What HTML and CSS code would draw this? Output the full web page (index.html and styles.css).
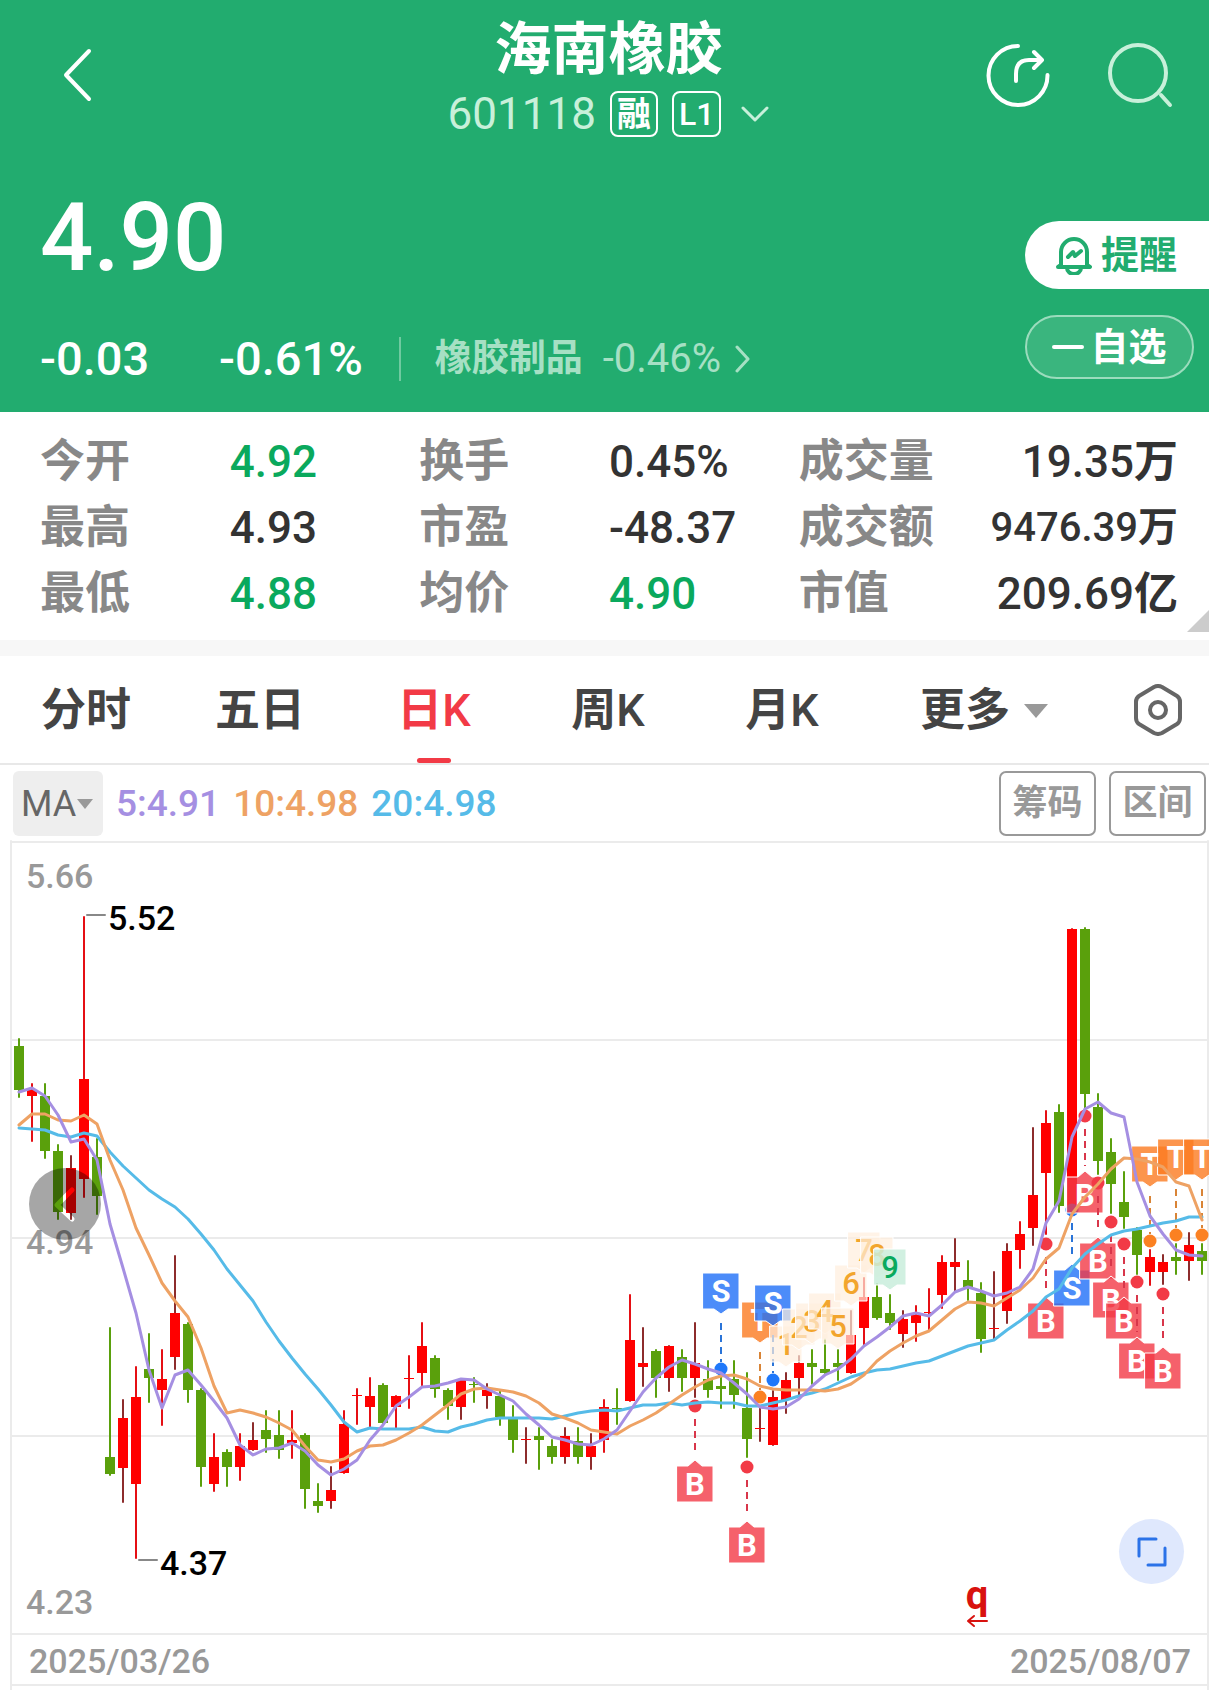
FILE: index.html
```html
<!DOCTYPE html>
<html lang="zh-CN">
<head>
<meta charset="utf-8">
<meta name="viewport" content="width=device-width, initial-scale=1">
<title>海南橡胶 601118</title>
<link rel="stylesheet" href="styles.css">
</head>
<body>
<header class="top">
  <div class="nav">
    <button class="icon-btn back" type="button" aria-label="返回">
      <svg width="32" height="54" viewBox="0 0 32 54"><path d="M28 3L5 27L28 51"/></svg>
    </button>
    <div class="name">
      <h1>海南橡胶</h1>
      <div class="code">
        <span>601118</span>
        <span class="badge">融</span>
        <span class="badge level">L1</span>
        <svg width="28" height="18" viewBox="0 0 28 18"><path d="M2 3L14 15L26 3"/></svg>
      </div>
    </div>
    <div class="actions">
      <button class="icon-btn" type="button" aria-label="分享">
        <svg width="66" height="66" viewBox="0 0 66 66">
          <path d="M33 4A29.500 29.500 0 1 0 62.500 33"/>
          <path d="M31 39V32Q31 18 44 18H56M49 10L57 18L49 26"/>
        </svg>
      </button>
      <button class="icon-btn soft" type="button" aria-label="搜索">
        <svg width="66" height="66" viewBox="0 0 66 66">
          <circle cx="31" cy="31" r="28"/>
          <path d="M54 53L63 63"/>
        </svg>
      </button>
    </div>
  </div>
  <div class="quote">
    <div class="quote-main">
      <div class="price">4.90</div>
      <div class="change">
        <span class="diff">-0.03</span>
        <span class="pct">-0.61%</span>
        <a class="sector" href="#sector">
          <span>橡胶制品</span>
          <span class="sector-pct">-0.46%</span>
          <svg width="16" height="28" viewBox="0 0 16 28"><path d="M2 2L13 14L2 26"/></svg>
        </a>
      </div>
    </div>
    <div class="quote-side">
      <button class="remind" type="button">
        <svg width="38" height="40" viewBox="0 0 38 40">
          <path d="M6 30V17A13 13 0 0 1 32 17V30L35 32H3Z"/>
          <path d="M12 33A7 6 0 0 0 26 33"/>
          <path d="M13 22L18 17L20 21L26 16"/>
        </svg>
        提醒
      </button>
      <button class="fav" type="button">
        <svg width="32" height="6" viewBox="0 0 32 6"><path d="M2 3H30"/></svg>
        自选
      </button>
    </div>
  </div>
</header>

<section class="stats">
  <div class="stat"><span class="label">今开</span><span class="down">4.92</span></div>
  <div class="stat"><span class="label">换手</span><span>0.45%</span></div>
  <div class="stat"><span class="label">成交量</span><span>19.35<b>万</b></span></div>
  <div class="stat"><span class="label">最高</span><span>4.93</span></div>
  <div class="stat"><span class="label">市盈</span><span>-48.37</span></div>
  <div class="stat"><span class="label">成交额</span><span class="long">9476.39<b>万</b></span></div>
  <div class="stat"><span class="label">最低</span><span class="down">4.88</span></div>
  <div class="stat"><span class="label">均价</span><span class="down">4.90</span></div>
  <div class="stat"><span class="label">市值</span><span>209.69<b>亿</b></span></div>
</section>

<nav class="tabs">
  <button type="button">分时</button>
  <button type="button">五日</button>
  <button type="button" class="active">日<span>K</span></button>
  <button type="button">周<span>K</span></button>
  <button type="button">月<span>K</span></button>
  <button type="button">更多<i class="caret"></i></button>
  <button type="button" aria-label="设置">
    <svg width="50" height="52" viewBox="0 0 50 52">
      <path d="M21 3Q25 1 29 3L44 12Q47 14 47 18V34Q47 38 44 40L29 49Q25 51 21 49L6 40Q3 38 3 34V18Q3 14 6 12Z"/>
      <circle cx="25" cy="26" r="8"/>
    </svg>
  </button>
</nav>

<div class="ma-bar">
  <div class="ma-pick">
    <select aria-label="指标">
      <option>MA</option>
      <option>BOLL</option>
    </select>
    <i class="caret"></i>
  </div>
  <span class="ma5">5:4.91</span>
  <span class="ma10">10:4.98</span>
  <span class="ma20">20:4.98</span>
  <button class="tool" type="button">筹码</button>
  <button class="tool" type="button">区间</button>
</div>

<main class="chart">
  <svg id="kline" viewBox="0 0 1209 850" role="img" aria-label="日K线">
    <g class="grid">
      <path d="M11 2H1209M11 200H1209M11 398H1209M11 596H1209M11 794H1209M11 845H1209M11 1V850M1208 1V850"/>
    </g>
    <g class="axis">
      <text x="26" y="48">5.66</text>
      <text x="26" y="414">4.94</text>
      <text x="26" y="774">4.23</text>
      <text x="29" y="833">2025/03/26</text>
      <text x="1191" y="833" text-anchor="end">2025/08/07</text>
    </g>
    <g id="candles"></g>
    <g id="marks"></g>
    <g id="lines"></g>
    <g class="extreme">
      <path d="M87 75H105M139 720H157"/>
      <text x="108" y="90">5.52</text>
      <text x="160" y="735">4.37</text>
    </g>
    <g class="exright">
      <text x="977" y="769" text-anchor="middle">q</text>
      <path d="M987 781H968M974 776L968 781L974 786"/>
    </g>
  </svg>
  <button class="prev" type="button" aria-label="上一段">
    <svg width="72" height="72" viewBox="0 0 72 72">
      <mask id="cut">
        <rect width="72" height="72" fill="#fff"/>
        <path d="M43 22L28 37L43 51" fill="none" stroke="#000" stroke-width="5"/>
      </mask>
      <circle cx="36" cy="36" r="36" mask="url(#cut)"/>
    </svg>
  </button>
  <button class="full" type="button" aria-label="全屏">
    <svg width="32" height="32" viewBox="0 0 32 32"><path d="M20 3H3V20M12 29H29V12"/></svg>
  </button>
</main>
<script src="chart.js"></script>
</body>
</html>
```
FILE: styles.css
```css
* {box-sizing:border-box;}
body {margin:0; background:#fff; color:#333; font:44px/66px Roboto, "Noto Sans CJK SC", sans-serif;}
button, select {margin:0; padding:0; border:0; background:none; color:inherit; font:inherit; cursor:pointer;}
svg {display:block; flex:none; fill:none; stroke-linecap:round; stroke-linejoin:round;}
h1 {margin:0; font-size:57px; line-height:76px; font-weight:bold;}

/* header */
.top {height:412px; background:#22ac6f; color:#fff;}
.top svg {stroke:currentColor; stroke-width:4;}
.nav {display:grid; grid-template-columns:1fr auto 1fr; padding:12px 36px 0 44px;}
.icon-btn {height:66px;}
.back {justify-self:start; margin:30px 0 0 17px;}
.name {text-align:center;}
.code {display:flex; align-items:center; justify-content:center; gap:14px; height:52px; color:#c8f0da;}
.code svg {margin-left:6px; stroke-width:3;}
.badge {min-width:48px; height:46px; padding:0 5px; border:2px solid #fff; border-radius:8px; color:#fff; font-size:34px; line-height:42px; font-weight:bold;}
.level {font-size:32px; font-weight:500;}
.actions {display:flex; gap:56px; justify-self:end; margin-top:30px;}
.soft {color:#c8f0da;}

.quote {display:flex; justify-content:space-between; margin-top:40px; padding-left:40px;}
.price {height:112px; font-size:94px; line-height:116px; font-weight:500;}
.change {display:flex; align-items:center; margin-top:34px; font-size:47px; font-weight:500;}
.diff {width:179px;}
.pct {padding-right:36px;}
.sector {display:flex; align-items:center; gap:14px; height:44px; padding-left:34px; border-left:2px solid #6fcaa0; color:#a6e0c4; font-size:37px; font-weight:bold; text-decoration:none;}
.sector-pct {margin-left:6px; font-size:40px; font-weight:normal;}
.sector svg {stroke-width:3;}
.quote-side {display:flex; flex-direction:column; align-items:flex-end; gap:26px; padding-top:41px;}
.remind, .fav {display:flex; align-items:center; font-size:38px; font-weight:bold;}
.remind {gap:8px; width:184px; height:68px; padding-left:30px; border-radius:34px 0 0 34px; background:#fff; color:#22ac6f;}
.fav {justify-content:center; gap:6px; width:169px; height:64px; margin-right:15px; border:2px solid #9bdcbd; border-radius:32px; background:#3ab57e;}

/* figures */
.stats {position:relative; display:grid; grid-template-columns:repeat(3, 1fr); padding:17px 31px 13px 40px; border-bottom:16px solid #f7f7f7; font-weight:500; white-space:nowrap;}
.stats:after {content:""; position:absolute; right:0; bottom:8px; width:22px; height:22px; background:#ccc; clip-path:polygon(100% 0, 100% 100%, 0 100%);}
.stat {display:flex;}
.stat .label {width:50%; color:#888; font-size:45px; font-weight:bold;}
.stat:nth-child(3n) {justify-content:space-between;}
.stat:nth-child(3n) .label {width:auto;}
.stat .down {color:#0aa95d;}
.stat .long {font-size:40px;}

/* period tabs */
.tabs {display:grid; grid-template-columns:174fr 174fr 174fr 174fr 174fr 230fr 109fr; height:109px; border-bottom:2px solid #e8e8e8;}
.tabs button {position:relative; display:flex; align-items:center; justify-content:center; padding:3px 2px 0 0; color:#444; font-size:45px; font-weight:bold;}
.tabs button:last-child {padding:0 0 0 6px;}
.tabs span {font-weight:500;}
.tabs svg {stroke:#666; stroke-width:4;}
.tabs .active {color:#f23a46;}
.tabs .active:after {content:""; position:absolute; bottom:0; width:34px; height:5px; border-radius:3px; background:#f23a46;}
.caret {width:0; height:0; border:12px solid transparent; border-top:14px solid #999; border-bottom:0;}
.tabs .caret {margin-left:14px;}

/* moving averages */
.ma-bar {display:flex; align-items:center; gap:13px; height:75px; padding:2px 3px 0 13px; font-size:37px; font-weight:500;}
.ma-pick {display:flex; align-items:center; width:90px; height:65px; padding:0 8px; border-radius:6px; background:#eee; color:#666;}
.ma-pick select {width:56px; height:65px; appearance:none; font-size:36px; font-weight:normal;}
.ma-pick .caret {border-width:10px 8px 0;}
.ma5 {color:#a58fe2;}
.ma10 {color:#eea264;}
.ma20 {color:#56bbe8;}
.tool {width:97px; height:65px; border:2px solid #999; border-radius:7px; color:#999; font-size:35px; font-weight:bold; line-height:60px;}
.ma20 + .tool {margin-left:auto;}

/* chart */
.chart {position:relative;}
#kline {width:100%; height:auto; overflow:hidden;}
.grid path {stroke:#ebebeb; stroke-width:2;}
.axis text {fill:#999; font-size:34px; font-weight:500;}
.extreme path {stroke:#888; stroke-width:2;}
.extreme text {fill:#000; font-size:34px; font-weight:500;}
.exright text {fill:#d8120f; font-size:40px; font-weight:bold;}
.exright path {stroke:#d8120f; stroke-width:2;}
.red {fill:#f00; stroke:#e50f14;}
.dark {fill:#f00; stroke:#8d2c2c;}
.green {fill:#5aa00c; stroke:#5aa00c;}
.wick {stroke-width:2;}
.body {stroke:none;}
.line {stroke-width:3;}
.line5 {stroke:#a58fe2;}
.line10 {stroke:#eea264;}
.line20 {stroke:#56bbe8;}
.tag {stroke:#fff; stroke-width:1;}
.dash {stroke-width:2; stroke-dasharray:7 5; stroke-linecap:butt;}
.mark text {fill:#fff; font-size:31px; font-weight:bold; text-anchor:middle;}
.mark-b .tag {fill:#f23a46; fill-opacity:.8;}
.mark-b .dot {fill:#f23a46;}
.mark-b .dash {stroke:#d8364a;}
.mark-s .tag {fill:#1f6ff8; fill-opacity:.8;}
.mark-s .dot {fill:#1f78fa;}
.mark-s .dash {stroke:#2a74d8;}
.mark-t .tag {fill:#fb7a20; fill-opacity:.8;}
.mark-t .dot {fill:#fb8122;}
.mark-t .dash {stroke:#d98436;}
.mark-n .tag {fill:#ffeedd; fill-opacity:.7;}
.mark-n text {fill:#f2a52d; font-weight:500;}
.mark-nine .tag {fill:#c9eddc; fill-opacity:.85;}
.mark-nine text {fill:#0aa95d; font-weight:500;}
.prev, .full {position:absolute;}
.prev {top:328px; left:29px;}
.prev circle {fill:rgba(0,0,0,.35);}
.full {top:679px; right:25px; display:flex; align-items:center; justify-content:center; width:65px; height:65px; border-radius:50%; background:#dfe8fd;}
.full path {stroke:#2b72e8; stroke-width:3;}
```
FILE: chart.js
```js
// colour, high, body top, body bottom, low
var Candles = [
  ['g',199,206,250,257], ['r',244,250,256,301], ['g',244,256,311,318], ['g',305,311,372,379],
  ['d',316,328,373,379], ['r',77,239,339,357], ['g',299,317,356,374], ['g',488,617,634,635],
  ['d',560,578,628,662], ['r',527,557,644,718], ['g',494,529,538,562], ['r',510,539,550,585],
  ['d',416,473,517,529], ['g',483,484,550,562], ['g',549,550,627,646], ['r',594,617,644,651],
  ['g',610,612,627,646], ['r',594,606,627,640], ['d',583,600,610,610], ['g',571,590,599,612],
  ['g',571,595,610,618], ['r',571,600,603,618], ['g',594,595,649,668], ['g',644,661,666,672],
  ['d',627,650,661,668], ['r',571,584,633,633], ['r',549,555,556,584], ['r',538,556,567,587],
  ['g',544,545,583,583], ['r',556,556,567,588], ['r',516,538,539,568], ['r',483,506,533,546],
  ['g',516,518,549,557], ['g',549,550,566,579], ['d',539,540,567,579], ['g',538,544,545,562],
  ['d',544,550,556,568], ['g',551,556,577,585], ['g',566,577,600,612], ['d',588,599,600,623],
  ['g',588,596,600,629], ['g',600,606,617,623], ['d',588,596,617,623], ['g',588,601,617,623],
  ['d',594,606,617,629], ['r',560,567,600,612], ['g',549,568,569,584], ['r',455,500,561,561],
  ['d',488,523,527,546], ['g',510,511,538,557], ['d',506,506,538,551], ['g',510,517,538,551],
  ['d',483,523,538,557], ['g',521,539,550,557], ['g',533,546,549,568], ['g',521,539,555,568],
  ['g',533,568,599,617], ['d',567,588,589,601], ['d',551,557,605,605], ['d',533,540,560,573],
  ['d',516,523,538,556], ['g',510,523,527,544], ['g',499,529,533,533], ['g',510,523,527,540],
  ['d',471,495,533,533], ['r',438,457,488,506], ['g',444,457,478,479], ['g',455,473,483,489],
  ['d',471,479,494,507], ['r',466,475,483,501], ['r',449,472,473,490], ['r',416,422,455,468],
  ['d',399,422,427,451], ['g',421,440,447,460], ['g',443,453,499,512], ['d',432,488,489,499],
  ['d',404,411,471,483], ['r',382,394,410,428], ['d',288,355,388,405], ['r',271,283,333,394],
  ['g',265,272,366,372], ['r',89,89,366,370], ['g',88,89,254,270], ['g',254,267,321,334],
  ['g',299,312,344,373], ['g',332,362,377,388], ['g',388,390,415,434], ['r',410,417,432,445],
  ['d',415,422,432,444], ['g',404,417,421,434], ['d',393,405,421,440], ['g',404,411,421,434]
];

var Lines = {
  line20: [288,289,290,295,297,293,296,312,326,338,350,359,367,379,394,410,429,445,461,482,501,518,534,
    549,565,582,592,588,589,589,589,587,591,592,587,584,580,578,578,578,578,579,576,573,571,570,571,568,
    565,565,563,565,563,562,563,563,566,566,563,560,556,553,549,543,537,533,530,529,526,523,521,516,511,
    506,503,500,490,481,471,457,449,428,414,404,395,391,389,386,383,381,377,377],
  line10: [285,274,274,280,281,275,284,320,350,388,415,443,461,477,508,546,573,570,573,577,583,590,606,
    620,622,619,611,606,605,600,593,585,575,565,554,549,548,550,552,556,563,574,578,583,590,592,594,586,
    580,573,564,555,547,540,536,535,539,546,549,550,550,550,551,549,544,535,521,511,503,496,491,480,469,
    462,463,466,458,450,438,419,408,374,357,344,329,318,319,322,327,342,346,380],
  line5: [252,248,256,275,302,299,320,384,428,473,530,568,535,530,545,561,578,605,615,609,608,603,611,
    625,635,629,620,600,585,566,557,547,546,543,539,540,549,555,561,574,585,597,600,604,605,599,590,571,
    552,538,527,520,524,529,533,543,554,567,569,567,559,546,535,529,519,506,497,487,476,473,476,465,452,
    447,451,456,453,447,429,383,361,297,269,262,273,277,342,376,394,410,415,416]
};

// type, candle index, box top, dot y, label
var Marks = [
  ['b',52,626,566,'B'], ['s',54,433,529,'S'], ['b',56,687,627,'B'], ['t',57,462,557,'T'],
  ['s',58,445,540,'S'], ['n',59,486,0,'1'], ['n',60,469,0,'2'], ['n',61,463,0,'3'],
  ['n',62,453,0,'4'], ['n',63,468,0,'5'], ['n',64,425,0,'6'], ['n',65,392,0,'7'],
  ['n',66,397,0,'8'], ['nine',67,409,0,'9'], ['b',79,463,404,'B'], ['s',81,430,370,'S'],
  ['b',82,337,276,'B'], ['b',83,403,343,'B'], ['b',84,442,382,'B'], ['b',85,463,404,'B'],
  ['b',86,503,442,'B'], ['t',87,306,401,'T'], ['b',88,513,454,'B'], ['t',89,299,395,'T'],
  ['t',91,299,395,'T']
];

function xAt(i) {
  return Math.round(19 + 13 * i);
}

function drawCandles() {
  var names = {g:'green', r:'red', d:'dark'},
      out = ''
  ;
  for(var i=0; i<Candles.length; i++) {
    var c = Candles[i], x = xAt(i);
    out += '<g class="'+ names[c[0]] +'"><path class="wick" d="M'+ x +' '+ c[1] +'V'+ c[4] +'"/>';
    out += '<rect class="body" x="'+ (x-5) +'" y="'+ c[2] +'" width="10" height="'+ (c[3]-c[2]) +'"/></g>';
  }
  document.getElementById('candles').innerHTML = out;
}

function drawLines() {
  var out = '';
  for(var id in Lines) {
    var pts = Lines[id].map(function(y, i) { return xAt(i) +','+ y; });
    out += '<polyline class="line '+ id +'" points="'+ pts.join(' ') +'"/>';
  }
  document.getElementById('lines').innerHTML = out;
}

function drawMarks() {
  var out = '';
  for(var i=0; i<Marks.length; i++) {
    var m = Marks[i],
        x = xAt(m[1]),
        top = m[2],
        dot = m[3],
        half = dot ? 18 : 16,
        end = top + 36,
        up = dot && dot < top
    ;
    out += '<g class="mark mark-'+ m[0] +'">';
    if(dot) {
      out += '<path class="dash" d="M'+ x +' '+ (up ? dot+13 : end+14) +'V'+ (up ? top-11 : dot-7) +'"/>';
      out += '<circle class="dot" cx="'+ x +'" cy="'+ dot +'" r="6.500"/>';
    }
    out += '<path class="tag" d="M'+ (x-half) +' '+ top;
    out += up ? 'H'+ (x-7) +'L'+ x +' '+ (top-6) +'L'+ (x+7) +' '+ top : '';
    out += 'H'+ (x+half) +'V'+ end;
    out += up ? '' : 'H'+ (x+7) +'L'+ x +' '+ (end+5) +'L'+ (x-7) +' '+ end;
    out += 'H'+ (x-half) +'Z"/>';
    out += '<text x="'+ x +'" y="'+ (top+29) +'">'+ m[4] +'</text></g>';
  }
  document.getElementById('marks').innerHTML = out;
}

drawCandles();
drawMarks();
drawLines();
```
